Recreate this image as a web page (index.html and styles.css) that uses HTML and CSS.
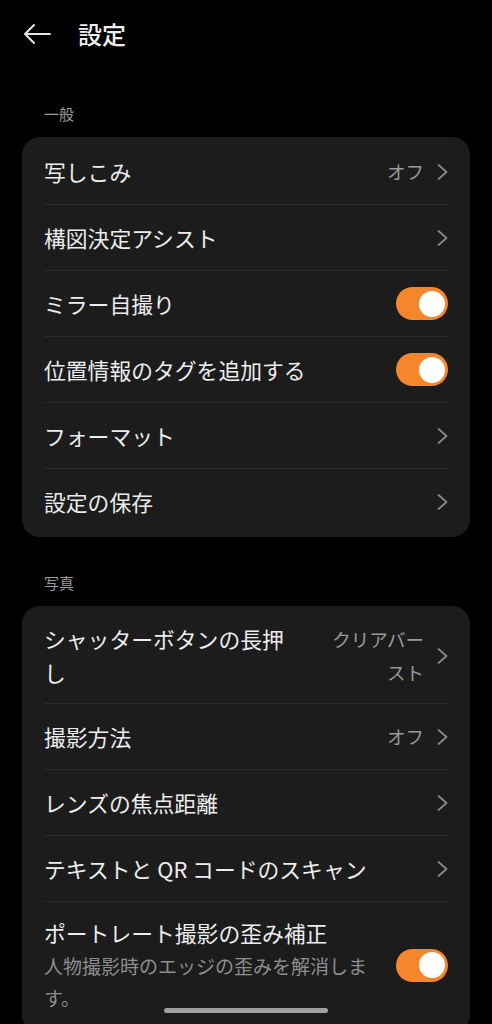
FILE: index.html
```html
<!DOCTYPE html>
<html lang="ja">
<head>
<meta charset="utf-8">
<link rel="stylesheet" href="styles.css">
</head>
<body>
<div class="screen">
  <header class="topbar">
    <svg class="back" width="30" height="22" viewBox="0 0 30 22"><path d="M28 11 H3 M12 2 L3 11 L12 20" fill="none" stroke="#e6e6e6" stroke-width="2" stroke-linecap="round" stroke-linejoin="round"/></svg>
    <h1 class="title">設定</h1>
  </header>

  <div class="section-label first">一般</div>
  <div class="card">
    <div class="row">
      <span class="label">写しこみ</span>
      <span class="value">オフ</span>
      <svg class="chev" width="11" height="16" viewBox="0 0 11 16"><path d="M1.5 1 L9.5 8 L1.5 15" fill="none" stroke="#8a8a8a" stroke-width="1.7" stroke-linecap="round" stroke-linejoin="round"/></svg>
    </div>
    <div class="row">
      <span class="label">構図決定アシスト</span>
      <svg class="chev" width="11" height="16" viewBox="0 0 11 16"><path d="M1.5 1 L9.5 8 L1.5 15" fill="none" stroke="#8a8a8a" stroke-width="1.7" stroke-linecap="round" stroke-linejoin="round"/></svg>
    </div>
    <div class="row">
      <span class="label">ミラー自撮り</span>
      <span class="toggle"><span class="knob"></span></span>
    </div>
    <div class="row">
      <span class="label">位置情報のタグを追加する</span>
      <span class="toggle"><span class="knob"></span></span>
    </div>
    <div class="row">
      <span class="label">フォーマット</span>
      <svg class="chev" width="11" height="16" viewBox="0 0 11 16"><path d="M1.5 1 L9.5 8 L1.5 15" fill="none" stroke="#8a8a8a" stroke-width="1.7" stroke-linecap="round" stroke-linejoin="round"/></svg>
    </div>
    <div class="row last">
      <span class="label">設定の保存</span>
      <svg class="chev" width="11" height="16" viewBox="0 0 11 16"><path d="M1.5 1 L9.5 8 L1.5 15" fill="none" stroke="#8a8a8a" stroke-width="1.7" stroke-linecap="round" stroke-linejoin="round"/></svg>
    </div>
  </div>

  <div class="section-label">写真</div>
  <div class="card card2">
    <div class="row tall">
      <span class="label wrap">シャッターボタンの長押し</span>
      <span class="value multi">クリアバースト</span>
      <svg class="chev" width="11" height="16" viewBox="0 0 11 16"><path d="M1.5 1 L9.5 8 L1.5 15" fill="none" stroke="#8a8a8a" stroke-width="1.7" stroke-linecap="round" stroke-linejoin="round"/></svg>
    </div>
    <div class="row">
      <span class="label">撮影方法</span>
      <span class="value">オフ</span>
      <svg class="chev" width="11" height="16" viewBox="0 0 11 16"><path d="M1.5 1 L9.5 8 L1.5 15" fill="none" stroke="#8a8a8a" stroke-width="1.7" stroke-linecap="round" stroke-linejoin="round"/></svg>
    </div>
    <div class="row">
      <span class="label">レンズの焦点距離</span>
      <svg class="chev" width="11" height="16" viewBox="0 0 11 16"><path d="M1.5 1 L9.5 8 L1.5 15" fill="none" stroke="#8a8a8a" stroke-width="1.7" stroke-linecap="round" stroke-linejoin="round"/></svg>
    </div>
    <div class="row">
      <span class="label">テキストと QR コードのスキャン</span>
      <svg class="chev" width="11" height="16" viewBox="0 0 11 16"><path d="M1.5 1 L9.5 8 L1.5 15" fill="none" stroke="#8a8a8a" stroke-width="1.7" stroke-linecap="round" stroke-linejoin="round"/></svg>
    </div>
    <div class="row tall last">
      <div class="textcol">
        <span class="label">ポートレート撮影の歪み補正</span>
        <span class="sub">人物撮影時のエッジの歪みを解消します。</span>
      </div>
      <span class="toggle"><span class="knob"></span></span>
    </div>
  </div>
</div>
<div class="home-indicator"></div>
</body>
</html>
```

FILE: styles.css
```css
html, body {
  margin: 0;
  padding: 0;
  background: #000;
}
body {
  width: 492px;
  height: 1024px;
  overflow: hidden;
  position: relative;
  font-family: "Noto Sans CJK JP", "Noto Sans", sans-serif;
  color: #ececec;
}
.screen {
  display: flex;
  flex-direction: column;
}
.topbar {
  height: 68px;
  display: flex;
  align-items: center;
  padding-left: 22px;
  box-sizing: border-box;
}
.back {
  display: block;
  margin-top: -1px;
}
.title {
  margin: 0 0 0 26px;
  font-size: 24px;
  font-weight: 500;
  line-height: 1;
  color: #efefef;
}
.section-label {
  font-size: 15px;
  line-height: 20px;
  color: #9b9b9b;
  padding: 36px 0 0 44px;
  margin-bottom: 13px;
}
.card {
  margin: 0 22px;
  background: #1c1c1c;
  border-radius: 18px;
  padding: 2px 22px;
}
.card2 {
  padding-bottom: 6px;
}
.row {
  min-height: 66px;
  display: flex;
  align-items: center;
  border-bottom: 1px solid #2b2b2b;
  box-sizing: border-box;
}
.row.last {
  border-bottom: none;
}
.row.tall {
  padding: 14px 0 13px;
}
.label {
  flex: 1;
  font-size: 21.8px;
  line-height: 34px;
  color: #ededed;
  min-width: 0;
}
.label.wrap {
  margin-right: 28px;
}
.value {
  font-size: 18.5px;
  color: #9a9a9a;
  margin-right: 13px;
  line-height: 33px;
}
.value.multi {
  width: 96px;
  text-align: right;
}
.chev {
  display: block;
  flex-shrink: 0;
}
.toggle {
  flex-shrink: 0;
  width: 52px;
  height: 33px;
  border-radius: 17px;
  background: #f5862b;
  display: flex;
  align-items: center;
  justify-content: flex-end;
  padding-right: 3px;
  box-sizing: border-box;
}
.knob {
  width: 26px;
  height: 26px;
  border-radius: 50%;
  background: #fff;
}
.textcol {
  flex: 1;
  display: flex;
  flex-direction: column;
  margin-right: 20px;
}
.sub {
  font-size: 19px;
  line-height: 32px;
  color: #8e8e8e;
}
.home-indicator {
  position: absolute;
  left: 164px;
  bottom: 11px;
  width: 164px;
  height: 5px;
  border-radius: 3px;
  background: #a0a0a0;
}
```
